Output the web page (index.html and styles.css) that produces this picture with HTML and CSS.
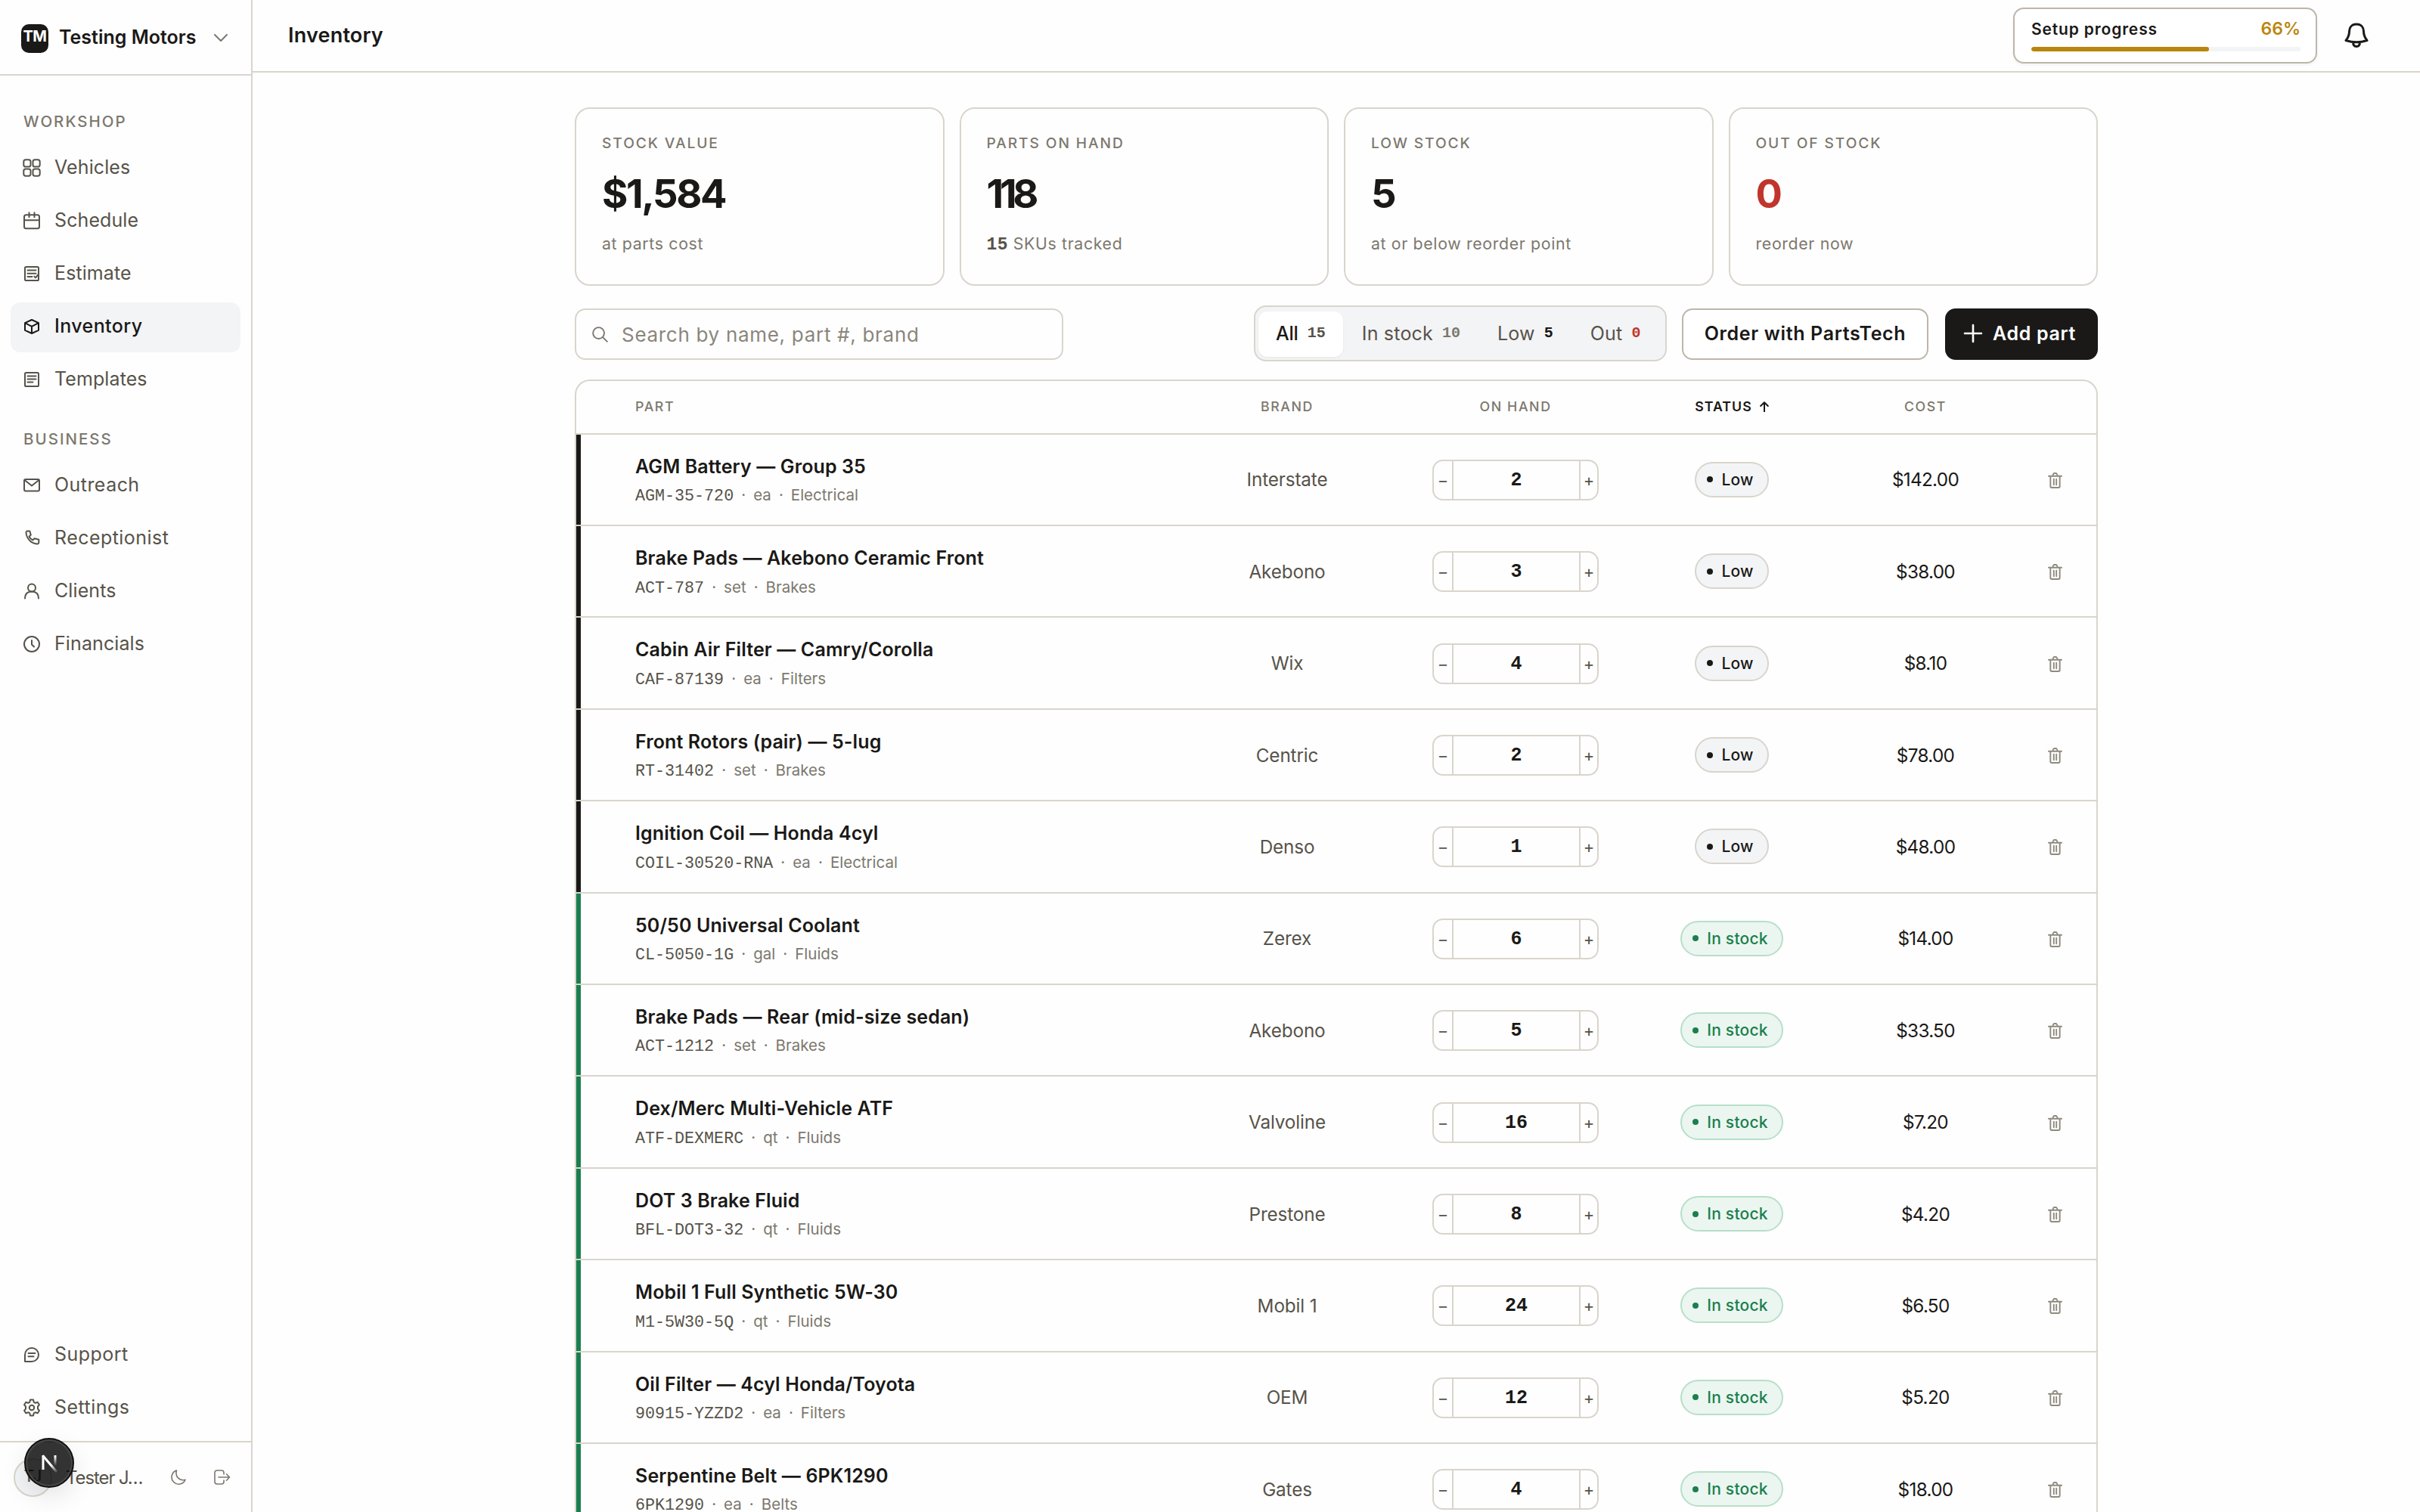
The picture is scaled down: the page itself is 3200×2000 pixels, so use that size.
FILE: index.html
```html
<!DOCTYPE html>
<html lang="en">
<head>
<meta charset="utf-8">
<title>Inventory</title>
<link rel="stylesheet" href="styles.css">
</head>
<body>
<svg class="sprite" aria-hidden="true">
  <symbol id="i-grid" viewBox="0 0 24 24"><rect x="1.3" y="1.3" width="9.2" height="9.2" rx="2.6"/><rect x="13.5" y="1.3" width="9.2" height="9.2" rx="2.6"/><rect x="1.3" y="13.5" width="9.2" height="9.2" rx="2.6"/><rect x="13.5" y="13.5" width="9.2" height="9.2" rx="2.6"/></symbol>
  <symbol id="i-cal" viewBox="0 0 24 24"><rect x="2" y="4.2" width="20" height="18" rx="2.5"/><path d="M2 11.2h20M8.5 1.2v6M15.5 1.2v6"/></symbol>
  <symbol id="i-est" viewBox="0 0 24 24"><rect x="3" y="3" width="18" height="18" rx="1.6"/><path d="M6.5 7.6h11M6.5 11.8h11M6.5 16h6M15.3 15.6l1.8 1.8 3.4-4.2"/></symbol>
  <symbol id="i-box" viewBox="0 0 24 24"><path d="M12 3l9 4.2v9.6L12 21l-9-4.2V7.2zM3 7.2l9 4.6 9-4.6M12 11.8V21"/></symbol>
  <symbol id="i-tpl" viewBox="0 0 24 24"><rect x="3" y="3" width="18" height="18" rx="1.6"/><path d="M6.5 7.6h11M6.5 11.6h11M6.5 15.6h7"/></symbol>
  <symbol id="i-mail" viewBox="0 0 24 24"><rect x="2" y="4" width="20" height="15.5" rx="2"/><path d="M2.5 5l9.5 7.5L21.5 5"/></symbol>
  <symbol id="i-phone" viewBox="0 0 24 24"><path d="M5.500 2.500h3.800l1.500 5-2.300 2.200c1.300 2.300 2.500 3.500 4.800 4.800l2.200-2.300 5.800 1.500v3.500c0 1.500-1 2.300-2.300 2.200C11.500 18.800 5.500 13 4.500 5c-.1-1.400.2-2 1-2.500z"/></symbol>
  <symbol id="i-user" viewBox="0 0 24 24"><circle cx="12" cy="7.500" r="5"/><path d="M3 21.500c0-5.500 3.200-9 9-9s9 3.500 9 9"/></symbol>
  <symbol id="i-clock" viewBox="0 0 24 24"><circle cx="12" cy="12" r="10"/><path d="M12 7v5.500l3 3"/></symbol>
  <symbol id="i-chat" viewBox="0 0 24 24"><path d="M3 20.500V12a9 9 0 1 1 9 9H3M7.500 10h9M7.500 14.200h7"/></symbol>
  <symbol id="i-gear" viewBox="0 0 24 24"><path d="M10 1.600h4l.8 3.200 2 1 3-1 2.200 3.400-2 2.300v3l2 2.300-2.200 3.400-3-1-2 1-.8 3.200h-4l-.8-3.200-2-1-3 1L2 15.800l2-2.300v-3L2 8.200l2.200-3.400 3 1 2-1z"/><circle cx="12" cy="12" r="3.200"/></symbol>
  <symbol id="i-trash" viewBox="0 0 20 22"><path d="M1 5h18M3.500 5.200v14q0 1.800 1.800 1.800h9.400q1.800 0 1.800-1.800v-14M6.500 5l1-3q.3-1 1.300-1h2.400q1 0 1.300 1l1 3M8.200 9v8M11.800 9v8"/></symbol>
</svg>

<div class="app">
  <aside class="sidebar">
    <div class="workspace">
      <span class="logo">TM</span>
      <span class="workspace-name">Testing Motors</span>
      <svg class="chevron" viewBox="0 0 18 10"><path d="M1 1l8 8 8-8"/></svg>
    </div>
    <nav class="nav">
      <h2 class="nav-title">WORKSHOP</h2>
      <a class="item"><svg><use href="#i-grid"/></svg><span>Vehicles</span></a>
      <a class="item"><svg><use href="#i-cal"/></svg><span>Schedule</span></a>
      <a class="item"><svg><use href="#i-est"/></svg><span>Estimate</span></a>
      <a class="item active"><svg><use href="#i-box"/></svg><span>Inventory</span></a>
      <a class="item"><svg><use href="#i-tpl"/></svg><span>Templates</span></a>
      <h2 class="nav-title second">BUSINESS</h2>
      <a class="item"><svg><use href="#i-mail"/></svg><span class="wide">Outreach</span></a>
      <a class="item"><svg><use href="#i-phone"/></svg><span class="wide">Receptionist</span></a>
      <a class="item"><svg><use href="#i-user"/></svg><span>Clients</span></a>
      <a class="item"><svg><use href="#i-clock"/></svg><span>Financials</span></a>
    </nav>
    <nav class="nav-bottom">
      <a class="item"><svg><use href="#i-chat"/></svg><span class="wide">Support</span></a>
      <a class="item"><svg><use href="#i-gear"/></svg><span class="wide">Settings</span></a>
    </nav>
    <div class="account">
      <span class="avatar">TJ</span>
      <span class="account-name">Tester J…</span>
      <svg class="moon" viewBox="0 0 20 20"><path d="M7.500 1A9.300 9.300 0 1 0 19 13.200C12 15.500 5 9.500 7.500 1z"/></svg>
      <svg class="logout" viewBox="0 0 22 20"><path d="M13 6V4q0-3-3-3H4Q1 1 1 4v12q0 3 3 3h6q3 0 3-3v-2M6 10h14M16.500 5.800l4 4.200-4 4.200"/></svg>
    </div>
    <div class="dev-badge">
      <svg viewBox="0 0 24 26">
        <defs>
          <linearGradient id="fade-a" x1="0" y1="0" x2="0" y2="1"><stop offset=".1" stop-color="#fff"/><stop offset="1" stop-color="#fff" stop-opacity="0"/></linearGradient>
          <linearGradient id="fade-b" gradientUnits="userSpaceOnUse" x1="12" y1="12" x2="22" y2="25"><stop offset=".2" stop-color="#fff"/><stop offset="1" stop-color="#fff" stop-opacity="0"/></linearGradient>
        </defs>
        <rect x="17.500" y="2" width="3" height="14" fill="url(#fade-a)"/>
        <path d="M3 21V2" stroke="#fff" stroke-width="3"/>
        <path d="M2.500 2.200L21 24" stroke="url(#fade-b)" stroke-width="3"/>
      </svg>
    </div>
  </aside>

  <main class="main">
    <header class="topbar">
      <h1>Inventory</h1>
      <div class="setup">
        <div class="setup-row"><span class="setup-label">Setup progress</span><span class="setup-pct">66%</span></div>
        <div class="track"><div class="fill" style="width:66%"></div></div>
      </div>
      <svg class="bell" viewBox="0 0 32 34"><path d="M16 2C9.500 2 6.500 6.500 6.500 11.500c0 6.500-2 9-4.500 12q14 4.500 28 0c-2.500-3-4.500-5.500-4.500-12C25.500 6.500 22.500 2 16 2zM11.500 25.500c0 4 2 6 4.500 6s4.500-2 4.500-6"/></svg>
    </header>

    <div class="content">
      <section class="cards">
        <div class="card"><div class="label">STOCK VALUE</div><div class="value">$1,584</div><div class="sub">at parts cost</div></div>
        <div class="card"><div class="label">PARTS ON HAND</div><div class="value tight">118</div><div class="sub"><b>15</b> SKUs tracked</div></div>
        <div class="card"><div class="label">LOW STOCK</div><div class="value">5</div><div class="sub">at or below reorder point</div></div>
        <div class="card"><div class="label">OUT OF STOCK</div><div class="value red">0</div><div class="sub">reorder now</div></div>
      </section>

      <section class="toolbar">
        <div class="search"><svg viewBox="0 0 22 22"><circle cx="9" cy="9" r="7.800"/><path d="M14.800 14.800l6 6"/></svg><span>Search by name, part #, brand</span></div>
        <div class="segments">
          <span class="seg on">All<b>15</b></span>
          <span class="seg">In stock<b class="muted">10</b></span>
          <span class="seg">Low<b class="dark">5</b></span>
          <span class="seg">Out<b class="red">0</b></span>
        </div>
        <button class="btn">Order with PartsTech</button>
        <button class="btn primary"><svg viewBox="0 0 22 22"><path d="M11 0v22M0 11h22"/></svg>Add part</button>
      </section>

      <section class="table">
        <div class="row head"><div>PART</div><div>BRAND</div><div>ON HAND</div><div class="sorted">STATUS<svg viewBox="0 0 12 14"><path d="M6 13.500V1.500M1.200 6L6 1.300 10.800 6"/></svg></div><div>COST</div><div></div></div>

        <div class="row low"><div><div class="name">AGM Battery — Group 35</div><div class="meta"><code>AGM-35-720</code><i>·</i>ea<i>·</i>Electrical</div></div><div class="brand">Interstate</div><div><div class="stepper"><span>−</span><b>2</b><span>+</span></div></div><div><span class="pill">Low</span></div><div class="cost">$142.00</div><div><svg class="trash"><use href="#i-trash"/></svg></div></div>
        <div class="row low"><div><div class="name">Brake Pads — Akebono Ceramic Front</div><div class="meta"><code>ACT-787</code><i>·</i>set<i>·</i>Brakes</div></div><div class="brand">Akebono</div><div><div class="stepper"><span>−</span><b>3</b><span>+</span></div></div><div><span class="pill">Low</span></div><div class="cost">$38.00</div><div><svg class="trash"><use href="#i-trash"/></svg></div></div>
        <div class="row low"><div><div class="name">Cabin Air Filter — Camry/Corolla</div><div class="meta"><code>CAF-87139</code><i>·</i>ea<i>·</i>Filters</div></div><div class="brand">Wix</div><div><div class="stepper"><span>−</span><b>4</b><span>+</span></div></div><div><span class="pill">Low</span></div><div class="cost">$8.10</div><div><svg class="trash"><use href="#i-trash"/></svg></div></div>
        <div class="row low"><div><div class="name">Front Rotors (pair) — 5-lug</div><div class="meta"><code>RT-31402</code><i>·</i>set<i>·</i>Brakes</div></div><div class="brand">Centric</div><div><div class="stepper"><span>−</span><b>2</b><span>+</span></div></div><div><span class="pill">Low</span></div><div class="cost">$78.00</div><div><svg class="trash"><use href="#i-trash"/></svg></div></div>
        <div class="row low"><div><div class="name">Ignition Coil — Honda 4cyl</div><div class="meta"><code>COIL-30520-RNA</code><i>·</i>ea<i>·</i>Electrical</div></div><div class="brand">Denso</div><div><div class="stepper"><span>−</span><b>1</b><span>+</span></div></div><div><span class="pill">Low</span></div><div class="cost">$48.00</div><div><svg class="trash"><use href="#i-trash"/></svg></div></div>
        <div class="row ok"><div><div class="name">50/50 Universal Coolant</div><div class="meta"><code>CL-5050-1G</code><i>·</i>gal<i>·</i>Fluids</div></div><div class="brand">Zerex</div><div><div class="stepper"><span>−</span><b>6</b><span>+</span></div></div><div><span class="pill">In stock</span></div><div class="cost">$14.00</div><div><svg class="trash"><use href="#i-trash"/></svg></div></div>
        <div class="row ok"><div><div class="name">Brake Pads — Rear (mid-size sedan)</div><div class="meta"><code>ACT-1212</code><i>·</i>set<i>·</i>Brakes</div></div><div class="brand">Akebono</div><div><div class="stepper"><span>−</span><b>5</b><span>+</span></div></div><div><span class="pill">In stock</span></div><div class="cost">$33.50</div><div><svg class="trash"><use href="#i-trash"/></svg></div></div>
        <div class="row ok"><div><div class="name">Dex/Merc Multi-Vehicle ATF</div><div class="meta"><code>ATF-DEXMERC</code><i>·</i>qt<i>·</i>Fluids</div></div><div class="brand">Valvoline</div><div><div class="stepper"><span>−</span><b>16</b><span>+</span></div></div><div><span class="pill">In stock</span></div><div class="cost">$7.20</div><div><svg class="trash"><use href="#i-trash"/></svg></div></div>
        <div class="row ok"><div><div class="name">DOT 3 Brake Fluid</div><div class="meta"><code>BFL-DOT3-32</code><i>·</i>qt<i>·</i>Fluids</div></div><div class="brand">Prestone</div><div><div class="stepper"><span>−</span><b>8</b><span>+</span></div></div><div><span class="pill">In stock</span></div><div class="cost">$4.20</div><div><svg class="trash"><use href="#i-trash"/></svg></div></div>
        <div class="row ok"><div><div class="name">Mobil 1 Full Synthetic 5W-30</div><div class="meta"><code>M1-5W30-5Q</code><i>·</i>qt<i>·</i>Fluids</div></div><div class="brand">Mobil 1</div><div><div class="stepper"><span>−</span><b>24</b><span>+</span></div></div><div><span class="pill">In stock</span></div><div class="cost">$6.50</div><div><svg class="trash"><use href="#i-trash"/></svg></div></div>
        <div class="row ok"><div><div class="name">Oil Filter — 4cyl Honda/Toyota</div><div class="meta"><code>90915-YZZD2</code><i>·</i>ea<i>·</i>Filters</div></div><div class="brand">OEM</div><div><div class="stepper"><span>−</span><b>12</b><span>+</span></div></div><div><span class="pill">In stock</span></div><div class="cost">$5.20</div><div><svg class="trash"><use href="#i-trash"/></svg></div></div>
        <div class="row ok"><div><div class="name">Serpentine Belt — 6PK1290</div><div class="meta"><code>6PK1290</code><i>·</i>ea<i>·</i>Belts</div></div><div class="brand">Gates</div><div><div class="stepper"><span>−</span><b>4</b><span>+</span></div></div><div><span class="pill">In stock</span></div><div class="cost">$18.00</div><div><svg class="trash"><use href="#i-trash"/></svg></div></div>
      </section>
    </div>
  </main>
</div>
</body>
</html>
```
FILE: styles.css
```css
:root {
  --ink: #1a1917;
  --soft: #57534a;
  --muted: #7c786e;
  --line: #d9d5cc;
  --line-strong: #bdb7ab;
  --fill: #f3f4f6;
  --red: #c0362c;
  --green: #1a7f4e;
  --gold: #b8860b;
  --mono: "Liberation Mono", monospace;
}

* { box-sizing: border-box; }
body {
  margin: 0;
  height: 2000px;
  overflow: hidden;
  background: #fefefe;
  color: var(--ink);
  font-family: Inter, "Open Sans", sans-serif;
}
h1, h2 { margin: 0; font-weight: inherit; }
svg { fill: none; stroke: currentColor; stroke-width: 2; stroke-linecap: round; stroke-linejoin: round; flex: none; }
.sprite { position: absolute; width: 0; height: 0; }

.app { display: flex; height: 2000px; overflow: hidden; }

/* Sidebar */
.sidebar {
  position: relative;
  width: 334px;
  flex: none;
  display: flex;
  flex-direction: column;
  border-right: 2px solid var(--line);
}
.workspace {
  height: 100px;
  flex: none;
  display: flex;
  align-items: center;
  padding-left: 28px;
  border-bottom: 2px solid var(--line);
}
.logo {
  width: 36px;
  height: 38px;
  margin-top: 4px;
  border-radius: 10px;
  background: var(--ink);
  color: #fff;
  font-size: 20px;
  font-weight: 700;
  line-height: 33px;
  letter-spacing: -.6px;
  text-align: center;
}
.workspace-name { width: 205px; padding-left: 14px; font-size: 25px; font-weight: 600; white-space: nowrap; }
.chevron { width: 18px; height: 10px; margin: 2px 0 0 14px; color: var(--muted); }

.nav { flex: 1; padding: 31px 14px 0; display: flex; flex-direction: column; gap: 4px; }
.nav-title {
  height: 59px;
  margin-bottom: -4px;
  padding-left: 17px;
  color: var(--muted);
  font-size: 20.5px;
  font-weight: 500;
  line-height: 59px;
  letter-spacing: 2px;
}
.nav-title.second { margin-top: 11px; }
.nav-bottom { padding: 0 14px 10px; display: flex; flex-direction: column; gap: 4px; }
.item {
  height: 66px;
  display: flex;
  align-items: center;
  gap: 18px;
  padding: 0 16px 2px;
  border-radius: 13px;
  color: var(--soft);
  font-size: 25px;
  letter-spacing: .1px;
}
.item svg { width: 24px; height: 24px; }
.item span { padding-bottom: 3px; }
.item .wide { letter-spacing: .45px; }
.item.active { background: var(--fill); color: var(--ink); font-weight: 500; letter-spacing: .4px; }

.account {
  height: 94px;
  flex: none;
  display: flex;
  align-items: center;
  padding-left: 18px;
  border-top: 2px solid var(--line);
}
.avatar {
  width: 51px;
  height: 51px;
  border: 2px solid var(--line);
  border-radius: 50%;
  background: var(--fill);
  color: var(--soft);
  font-size: 21px;
  font-weight: 500;
  line-height: 44px;
  text-align: center;
}
.account-name { width: 157px; padding-left: 18px; color: var(--soft); font-size: 24px; letter-spacing: -1.1px; }
.moon { width: 20px; height: 20px; color: var(--muted); stroke-width: 1.6; }
.logout { width: 22px; height: 20px; margin-left: 37px; color: var(--muted); stroke-width: 1.6; }

.dev-badge {
  position: absolute;
  left: 32px;
  top: 1902px;
  width: 66px;
  height: 66px;
  padding: 19px 20px;
  border: 2px solid #111;
  border-radius: 50%;
  background: rgba(0, 0, 0, .8);
  box-shadow: inset 0 0 0 2px #484848, 0 12px 32px rgba(0, 0, 0, .1);
}
.dev-badge svg { display: block; width: 24px; height: 26px; stroke: none; overflow: visible; stroke-linecap: butt; }

/* Top bar */
.main { flex: 1; min-width: 0; }
.topbar {
  height: 96px;
  display: flex;
  align-items: center;
  padding: 0 68px 2px 47px;
  border-bottom: 2px solid var(--line);
}
.topbar h1 { flex: 1; font-size: 27px; font-weight: 600; letter-spacing: .2px; }
.setup {
  width: 402px;
  height: 74px;
  margin-top: 2px;
  padding: 10px 20px 0 22px;
  border: 2px solid var(--line-strong);
  border-radius: 14px;
  background: #fff;
  box-shadow: 0 2px 4px rgba(0, 0, 0, .05);
}
.setup-row { height: 34px; display: flex; justify-content: space-between; line-height: 34px; }
.setup-label { font-size: 21px; font-weight: 600; letter-spacing: .85px; }
.setup-pct { color: var(--gold); font-size: 23px; font-weight: 600; line-height: 33px; }
.track { height: 6px; margin-top: 6px; border-radius: 3px; background: var(--fill); overflow: hidden; }
.fill { height: 6px; border-radius: 3px; background: var(--gold); }
.bell { width: 32px; height: 34px; margin: 2px 0 0 36px; stroke-width: 3; }

/* Content */
.content { width: 2014px; margin: 46px 0 0 426px; }
.cards { display: grid; grid-template-columns: repeat(4, 1fr); gap: 20px; }
.card { height: 236px; padding: 33px 34px 0; border: 2px solid var(--line); border-radius: 20px; }
.label { color: var(--muted); font-size: 19.2px; font-weight: 500; line-height: 24px; letter-spacing: 1.9px; }
.value { margin-top: 25px; font-size: 52.5px; font-weight: 650; line-height: 60px; letter-spacing: -2.4px; }
.value.tight { letter-spacing: -5.2px; }
.sub { margin-top: 21px; color: var(--muted); font-size: 21.3px; line-height: 30px; letter-spacing: .65px; white-space: nowrap; }
.sub b { font: 700 23px/20px var(--mono); color: var(--soft); letter-spacing: .5px; }
.red { color: var(--red); }

.toolbar { height: 74px; margin-top: 26px; display: flex; align-items: center; }
.search {
  width: 646px;
  height: 68px;
  margin: 2px auto 0 0;
  display: flex;
  align-items: center;
  gap: 18px;
  padding-left: 21px;
  border: 2px solid var(--line);
  border-radius: 14px;
  color: #8a867b;
  font-size: 26px;
  letter-spacing: .7px;
}
.search svg { width: 21px; height: 21px; color: var(--muted); }
.segments {
  width: 546px;
  height: 74px;
  display: flex;
  padding: 6px 4px;
  border: 2px solid var(--line);
  border-radius: 16px;
  background: var(--fill);
}
.seg {
  height: 60px;
  display: flex;
  align-items: center;
  padding: 0 24px 2px 25px;
  border-radius: 12px;
  color: var(--soft);
  font-size: 25px;
  letter-spacing: .2px;
  white-space: nowrap;
}
.seg b { margin-left: 12px; font: 700 20px/24px var(--mono); letter-spacing: 0; color: var(--soft); }
.seg.on { background: #fff; color: var(--ink); font-weight: 500; letter-spacing: -.2px; padding: 0 23px 2px; box-shadow: 0 1px 3px rgba(0, 0, 0, .06); }
.seg b.muted { color: var(--muted); }
.seg b.dark { color: var(--ink); }
.seg b.red { color: var(--red); }
.btn {
  width: 326px;
  height: 68px;
  margin: 2px 0 0 20px;
  padding: 0 0 2px;
  display: flex;
  align-items: center;
  justify-content: center;
  gap: 15px;
  border: 2px solid var(--line-strong);
  border-radius: 14px;
  background: #fff;
  color: var(--ink);
  font: 600 25px Inter, sans-serif;
  letter-spacing: .65px;
}
.btn.primary { width: 202px; margin-left: 22px; padding-right: 3px; border-color: var(--ink); background: var(--ink); color: #fff; }
.btn svg { width: 22px; height: 22px; stroke-width: 2.6; overflow: visible; }

/* Parts table */
.table { margin-top: 24px; border: 2px solid var(--line); border-radius: 20px 20px 0 0; border-bottom: 0; overflow: hidden; }
.row {
  height: 121.4px;
  display: grid;
  grid-template-columns: 800px 280px 324px 248px 264px 78px;
  align-items: center;
  justify-items: center;
  border-bottom: 2px solid var(--line);
}
.row > :first-child { justify-self: stretch; padding-left: 78px; }
.row.head {
  height: 70.7px;
  padding-bottom: 1px;
  color: var(--muted);
  font-size: 17.8px;
  font-weight: 500;
  letter-spacing: 1.6px;
}
.head .sorted { display: flex; align-items: center; gap: 10px; color: var(--ink); font-weight: 600; letter-spacing: 1px; }
.sorted svg { width: 12px; height: 14px; }
.row.low { background: linear-gradient(var(--ink), var(--ink)) 0 0 / 6px 100% no-repeat; background-clip: padding-box; }
.row.ok { background: linear-gradient(var(--green), var(--green)) 0 0 / 6px 100% no-repeat; background-clip: padding-box; }
.name { font-size: 25px; font-weight: 600; line-height: 30px; letter-spacing: .12px; }
.meta { margin-top: 11.5px; color: var(--muted); font-size: 20.5px; line-height: 24px; }
.meta code { color: var(--soft); font: 21.7px/20px var(--mono); }
.meta i { display: inline-block; width: 26px; text-align: center; font-style: normal; }
.brand { color: var(--soft); font-size: 24.3px; letter-spacing: -.15px; }
.cost { font-size: 24.3px; letter-spacing: -.7px; }

.stepper {
  width: 220px;
  height: 54px;
  margin-top: 1px;
  display: grid;
  grid-template-columns: 24px 170px 22px;
  border: 2px solid var(--line);
  border-radius: 14px;
  text-align: center;
  line-height: 50px;
}
.stepper span { color: var(--soft); font-size: 22px; font-weight: 400; }
.stepper b { border: solid var(--line); border-width: 0 2px; font: 700 25px/52px var(--mono); }

.pill {
  height: 47px;
  display: flex;
  align-items: center;
  gap: 11px;
  padding: 0 18px 0 14px;
  border: 2px solid var(--line);
  border-radius: 24px;
  background: var(--fill);
  font-size: 21px;
  font-weight: 500;
  letter-spacing: .2px;
}
.pill::before { content: ""; width: 8px; height: 8px; border-radius: 50%; background: currentColor; }
.ok .pill { border-color: #b7dfc9; background: #ebf6f0; color: var(--green); }
.trash { display: block; width: 19px; height: 21px; margin-top: 2px; color: #8f8a7f; }
```
